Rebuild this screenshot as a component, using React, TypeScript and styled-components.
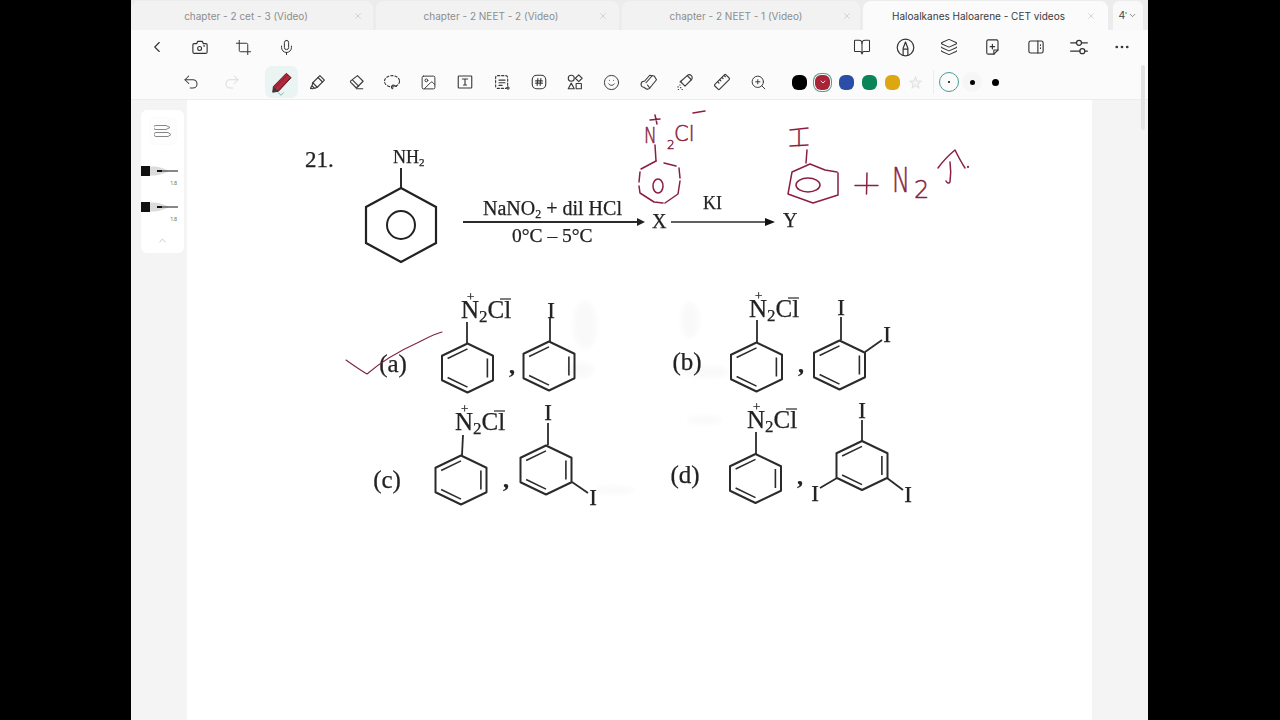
import React from "react";
import styled, { createGlobalStyle } from "styled-components";
import { BookOpen, ChevronDown, ChevronLeft, ChevronUp, Crop, Image, Layers, Mic, MoreHorizontal, Redo2, Smile, Undo2, X, ZoomIn } from "lucide-react";

const Global = createGlobalStyle`
  html, body { margin: 0; background: #000; }
  body { font-family: Inter, "Liberation Sans", sans-serif; overflow: hidden; }
`;

const Stage = styled.div`
  width: 1280px;
  height: 720px;
  display: flex;
  padding-left: 131px;
  box-sizing: border-box;
`;

const Tablet = styled.div`
  position: relative;
  width: 1017px;
  height: 720px;
  display: flex;
  flex-direction: column;
  background: #f4f4f4;
  overflow: hidden;
`;

const TabBar = styled.div`
  height: 30px;
  display: flex;
  gap: 3px;
  padding-top: 1px;
  box-sizing: border-box;
  background: #ececec;
`;

const Tab = styled.div<{ $active?: boolean; $width: number }>`
  width: ${p => p.$width}px;
  display: flex;
  align-items: center;
  padding-left: 8px;
  box-sizing: border-box;
  border-radius: 8px 8px 0 0;
  background: ${p => (p.$active ? "#fbfbfb" : "#f2f2f2")};
  color: ${p => (p.$active ? "#3a3a3a" : "#8d8d8d")};
  font-size: 10px;
`;

const TabTitle = styled.span`
  flex: 1;
  text-align: center;
  white-space: nowrap;
`;

const TabClose = styled.span<{ $gap: number }>`
  display: flex;
  margin-right: ${p => p.$gap}px;
  color: #b5b5b5;
`;

const PageCount = styled.div`
  width: 30px;
  margin-left: 2px;
  display: flex;
  align-items: center;
  justify-content: center;
  background: #f9f9f9;
  border-radius: 6px 6px 0 0;
  color: #444;
  font-size: 10.5px;
`;

const Dot = styled.i`
  width: 2px;
  height: 2px;
  margin: 0 1px 6px 0;
  border-radius: 50%;
  background: #53c98a;
`;

const TopBar = styled.div`
  height: 34px;
  display: flex;
  align-items: center;
  padding-left: 4px;
  background: #fbfbfb;
  color: #333;
`;

const TopGroup = styled.div<{ $right?: boolean }>`
  display: flex;
  margin-left: ${p => (p.$right ? "auto" : "0")};
  margin-right: ${p => (p.$right ? "4px" : "0")};
`;

const TopButton = styled.span`
  width: 43.4px;
  height: 30px;
  display: flex;
  align-items: center;
  justify-content: center;
`;

const ToolBar = styled.div`
  height: 36px;
  display: flex;
  align-items: center;
  padding: 1px 0 0 42px;
  background: #fbfbfb;
  border-bottom: 1px solid #ececec;
  box-sizing: border-box;
  color: #3a3a3a;
`;

const Tool = styled.span<{ $active?: boolean; $faded?: boolean; $width?: number; $gap?: number }>`
  width: ${p => p.$width ?? 36.7}px;
  height: 32px;
  margin-left: ${p => p.$gap ?? 0}px;
  flex: none;
  display: flex;
  align-items: center;
  justify-content: center;
  border-radius: 7px;
  position: relative;
  color: ${p => (p.$faded ? "#dcdcdc" : "inherit")};
  background: ${p => (p.$active ? "#e9f4f3" : "transparent")};
`;

const ActiveCaret = styled.span`
  position: absolute;
  bottom: -1px;
  left: 50%;
  margin-left: -5px;
  display: flex;
  color: #2f8f8a;
`;

const Swatches = styled.div`
  display: flex;
  align-items: center;
  gap: 8.3px;
  margin-left: 15px;
`;

const Swatch = styled.span<{ $color: string; $selected?: boolean }>`
  width: 15px;
  height: 15px;
  display: flex;
  align-items: center;
  justify-content: center;
  border-radius: 6px;
  background: ${p => p.$color};
  color: #fff;
  box-shadow: ${p => (p.$selected ? `0 0 0 1px #fbfbfb, 0 0 0 2px #4f9a98` : "none")};
`;

const Divider = styled.span`
  width: 1px;
  height: 24px;
  margin: 0 5px 0 11px;
  background: #eeeeee;
`;

const Sizes = styled.div`
  display: flex;
  align-items: center;
  gap: 3.5px;
`;

const SizeButton = styled.span<{ $selected?: boolean; $dot: number }>`
  width: 20px;
  height: 20px;
  display: flex;
  align-items: center;
  justify-content: center;
  border-radius: 50%;
  box-sizing: border-box;
  border: ${p => (p.$selected ? "1px solid #4f9a98" : "none")};
  background: ${p => (p.$dot === 5 ? "#f6f6f6" : "transparent")};
  &::after {
    content: "";
    width: ${p => p.$dot}px;
    height: ${p => p.$dot}px;
    border-radius: 50%;
    background: #000;
  }
`;

const Workspace = styled.div`
  flex: 1;
  display: flex;
  min-height: 0;
`;

const RailColumn = styled.div`
  width: 56px;
  flex: none;
  padding: 10px 0 0 10px;
  box-sizing: border-box;
`;

const Rail = styled.div`
  width: 43px;
  height: 143px;
  display: flex;
  flex-direction: column;
  align-items: center;
  background: #fff;
  border-radius: 6px;
`;

const RailTop = styled.span`
  width: 26px;
  height: 26px;
  margin-top: 8px;
  display: flex;
  align-items: center;
  justify-content: center;
  border-radius: 5px;
  background: #fdfdfd;
  box-shadow: 0 0 2px #f0f0f0;
  color: #888;
`;

const PenRow = styled.div<{ $first?: boolean }>`
  width: 100%;
  height: 36px;
  margin-top: ${p => (p.$first ? "20px" : "0")};
  display: flex;
  flex-direction: column;
`;

const PenWidth = styled.span`
  align-self: flex-end;
  margin: 2px 7px 0 0;
  color: #777;
  font-size: 5px;
  line-height: 7px;
`;

const RailCaret = styled.span`
  margin-top: -1px;
  display: flex;
  color: #999;
`;

const Sheet = styled.div`
  width: 905px;
  flex: none;
  background: #fff;
`;

const SheetArt = styled.svg`
  display: block;
  width: 905px;
  height: 620px;
  font-family: "Liberation Serif", "Times New Roman", serif;
  fill: #222;
`;

const Print = styled.text`
  filter: blur(0.3px);
  stroke: #222;
  stroke-width: 0.25px;
`;

const Ink = styled.text`
  fill: #8b1f40;
  stroke: #8b1f40;
  stroke-width: 0.5px;
  font-family: "DejaVu Sans", sans-serif;
  font-weight: 200;
`;

const Scroller = styled.div`
  position: absolute;
  top: 65px;
  right: 3px;
  width: 4px;
  height: 65px;
  border-radius: 2px;
  background: #e3e3e3;
`;

const I = { size: 17, strokeWidth: 1.4 };

const Svg = ({ w = 18, h = 18, vb = "0 0 24 24", sw = 1.5, children }: { w?: number; h?: number; vb?: string; sw?: number; children: React.ReactNode }) => (
  <svg width={w} height={h} viewBox={vb} fill="none" stroke="currentColor" strokeWidth={sw} strokeLinecap="round" strokeLinejoin="round">
    {children}
  </svg>
);

const CameraIcon = () => (
  <Svg>
    <path d="M4 7.500h3.500L9 4.500h6l1.500 3H20a1.500 1.500 0 0 1 1.500 1.500v9.500A2 2 0 0 1 19.500 20.500h-15A2 2 0 0 1 2.500 18.500V9A1.500 1.500 0 0 1 4 7.500z" />
    <circle cx="11.500" cy="14" r="2.600" />
    <circle cx="17.500" cy="10.500" r=".4" />
  </Svg>
);

const PenCircleIcon = () => (
  <Svg w={19} h={19}>
    <circle cx="12" cy="12" r="10.500" />
    <path d="M9 22V13l3-8 3 8v9M9 14h6" />
  </Svg>
);

const NoteIcon = () => (
  <Svg>
    <path d="M7 2.500h11a2 2 0 0 1 2 2V16l-5.500 5.500H7a2 2 0 0 1-2-2v-15a2 2 0 0 1 2-2z" />
    <path d="M20 16h-5.500v5.500M12.500 8.500v6M9.500 11.500h6" />
  </Svg>
);

const PanelIcon = () => (
  <Svg>
    <rect x="2.500" y="4" width="19" height="16" rx="2.500" />
    <path d="M14.500 4v16M18 9v1M18 13v1" />
  </Svg>
);

const SlidersIcon = () => (
  <Svg w={20} h={20}>
    <path d="M2 7h7M15 7h7M2 17h11M19 17h3" />
    <circle cx="12" cy="7" r="3" />
    <circle cx="16" cy="17" r="3" />
  </Svg>
);

const PenIcon = () => (
  <svg width="21" height="21" viewBox="0 0 24 24">
    <path d="M17.500 1.500l5.500 5-14.500 15.500L2 23l.8-6.500z" fill="#b3283c" stroke="#4a2027" strokeWidth="1.100" strokeLinejoin="round" />
    <path d="M5 17.500l14-14.500M8.500 21L21.500 7" stroke="#7e1a2a" strokeWidth="1" />
    <path d="M2.800 16.500L2 23l6.500-1z" fill="#3a3a3a" />
  </svg>
);

const HighlighterIcon = () => (
  <Svg>
    <path d="M14.500 3.500l6 6-9.500 9.500-6-6z" />
    <path d="M5 13l-1 4 3.500 3.500 3.500-1.500M3.500 17.500l-1.500 3 3 .5 1.500-1.500M12 6l6 6" />
  </Svg>
);

const EraserIcon = () => (
  <Svg>
    <path d="M14 3.500l7.500 7.500-9 9-7.500-7.500a1.500 1.500 0 0 1 0-2z" />
    <path d="M7.500 9.500l8 8M12.500 21H21" />
  </Svg>
);

const LassoIcon = () => (
  <Svg>
    <ellipse cx="12" cy="11" rx="10" ry="7.500" strokeDasharray="3 2.600" />
    <path d="M13 21a2.500 2.500 0 1 1 3-3.500M15 17l3 1" />
  </Svg>
);

const TextBoxIcon = () => (
  <Svg>
    <rect x="3" y="4" width="18" height="16" rx="1" />
    <path d="M8.500 8h7M12 8v8M10 16h4" />
  </Svg>
);

const TextSelectIcon = () => (
  <Svg>
    <rect x="3.500" y="3.500" width="16" height="17" rx="2.500" strokeDasharray="3 2.500" />
    <path d="M8 9.500h8M8 13h8M8 16.500h4M20 18v4M18 20h4" />
  </Svg>
);

const HashIcon = () => (
  <Svg>
    <rect x="3" y="3" width="18" height="18" rx="6" />
    <path d="M10.500 7.500l-1 9M14.500 7.500l-1 9M7.500 10.500h9M7.500 13.500h9" />
  </Svg>
);

const ShapesIcon = () => (
  <Svg>
    <circle cx="7" cy="7" r="4" />
    <path d="M17 2.500l4.500 4.500-4.500 4.500L12.500 7zM7 13.500l4 7.500H3z" />
    <rect x="13.500" y="14" width="7" height="7" rx=".5" />
  </Svg>
);

const TapeIcon = () => (
  <Svg>
    <path d="M6 11l7-8 6 1 3 5-9 11a4 4 0 0 1-5 1l-3-2a4 4 0 0 1 1-8z" />
    <path d="M8 13l8-9M13 20l-3-4" />
  </Svg>
);

const LaserIcon = () => (
  <Svg>
    <path d="M15 3.500l5.500 5.500-8.500 8.500-5.500-5.500a3.900 3.900 0 0 1 0-1z" />
    <path d="M15 3.500a3.500 3.500 0 0 1 5.500 5.500M6.500 11l-1 1M5 16h.5M2.500 18.500h.5M6 19.500h.5M3 22h.5M8 22h.5" />
  </Svg>
);

const RulerIcon = () => (
  <Svg>
    <rect x="1.500" y="7.500" width="21" height="9" rx="1.500" transform="rotate(-45 12 12)" />
    <path d="M9 9l1.500 1.500M12 6l1.500 1.500M15 3.500l1.500 1.500M6.500 12L8 13.500" />
  </Svg>
);

const StarIcon = () => (
  <svg width="13" height="13" viewBox="0 0 24 24" fill="#f4f4f4" stroke="#e2e2e2" strokeWidth="2">
    <path d="M12 2l3 7 7 .7-5.300 4.800L18.200 22 12 18l-6.200 4 1.500-7.500L2 9.700 9 9z" />
  </svg>
);

const RailIcon = () => (
  <svg width="18" height="14" viewBox="0 0 18 14" fill="none" stroke="currentColor" strokeWidth="1">
    <path d="M2 1.500h10l4 2-4 2H2a1 1 0 0 1-.6-4zM2 8.500h12l3 2-3 2H2a1 1 0 0 1 0-4z" />
  </svg>
);

const Nib = () => (
  <svg width="43" height="14" viewBox="0 0 43 14">
    <rect x="0" y="2" width="9" height="10" fill="#111" />
    <path d="M9 2.500h5c5 0 9 2.500 14 4h9v1h-9C23 9 19 11.500 14 11.500H9z" fill="#dcdcdc" />
    <path d="M16 7h21" stroke="#222" strokeWidth="1" />
    <path d="M16 7h5" stroke="#111" strokeWidth="2" />
  </svg>
);

// one benzene ring: the scans are a little wider than a true hexagon, kekule bonds on upper left, right and lower left
const Ring = ({ x, y, w = 25.500, h = 24.500 }: { x: number; y: number; w?: number; h?: number }) => {
  const pts = [[0, -h], [w, -h / 2], [w, h / 2], [0, h], [-w, h / 2], [-w, -h / 2]].map(([a, b]) => [x + a, y + b]);
  const pull = (p: number[], k: number) => [x + (p[0] - x) * k, y + (p[1] - y) * k];
  const bond = (a: number, b: number) => {
    const p = pull(pts[a], 0.78);
    const q = pull(pts[b], 0.78);
    return `M${p[0]} ${p[1]}L${q[0]} ${q[1]}`;
  };
  return (
    <g fill="none" stroke="#2b2b2b" strokeWidth="2">
      <polygon points={pts.map(p => p.join(",")).join(" ")} strokeLinejoin="round" />
      <path d={`${bond(5, 0)}${bond(1, 2)}${bond(3, 4)}`} strokeWidth="1.600" />
    </g>
  );
};

const Line = ({ d, w = 1.800 }: { d: string; w?: number }) => <path d={d} fill="none" stroke="#2b2b2b" strokeWidth={w} />;

const Diazonium = ({ x, y }: { x: number; y: number }) => (
  <>
    <Print x={x} y={y} fontSize="25">
      N<tspan fontSize="17" dy="4">2</tspan>
      <tspan dy="-4">Cl</tspan>
    </Print>
    <Print x={x + 6} y={y - 17} fontSize="13">+</Print>
    <Line d={`M${x + 39} ${y - 19}h11`} w={1.200} />
  </>
);

const Iodo = ({ x, y }: { x: number; y: number }) => (
  <Print x={x} y={y} fontSize="23" textAnchor="middle">I</Print>
);

const Label = ({ x, y, t }: { x: number; y: number; t: string }) => (
  <Print x={x} y={y} fontSize="25" textAnchor="middle">{t}</Print>
);

const Comma = ({ x, y }: { x: number; y: number }) => (
  <Print x={x} y={y} fontSize="24" textAnchor="middle" fontWeight="700">,</Print>
);

const Question = () => (
  <SheetArt viewBox="187 100 905 620" role="img">
    <defs>
      <filter id="soft"><feGaussianBlur stdDeviation="2.500" /></filter>
    </defs>
    <g filter="url(#soft)" fill="#f9f9f9">
      <ellipse cx="585" cy="325" rx="12" ry="24" />
      <ellipse cx="580" cy="370" rx="14" ry="8" />
      <ellipse cx="690" cy="320" rx="9" ry="18" />
      <ellipse cx="705" cy="372" rx="24" ry="6" />
      <ellipse cx="705" cy="420" rx="18" ry="4" />
      <ellipse cx="615" cy="490" rx="20" ry="4" />
    </g>

    <Print x="305" y="167" fontSize="23">21.</Print>
    <Print x="393" y="163" fontSize="18">NH<tspan fontSize="11" dy="3">2</tspan></Print>
    <Line d="M401 168v20" w={2} />
    <polygon points="401,188 436,207 436,243 401,262 366,243 366,207" fill="none" stroke="#222" strokeWidth="2.200" />
    <circle cx="401" cy="225" r="14" fill="none" stroke="#222" strokeWidth="2" />

    <Print x="483" y="215" fontSize="20">NaNO<tspan fontSize="12" dy="3">2</tspan><tspan dy="-3"> + dil HCl</tspan></Print>
    <Print x="512" y="242" fontSize="19.500">0°C – 5°C</Print>
    <Line d="M463 222H640" w={1.800} />
    <path d="M637 218l8 4-8 4z" fill="#222" />
    <Print x="652" y="228" fontSize="20">X</Print>
    <Print x="703" y="209" fontSize="18">KI</Print>
    <Line d="M671 222H768" w={1.600} />
    <path d="M765 218l10 4-10 4z" fill="#111" />
    <Print x="783" y="227" fontSize="20">Y</Print>

    <Label x={393} y={372} t="(a)" />
    <Diazonium x={461} y={318} />
    <Line d="M467 322v22" />
    <Ring x={467.500} y={368} />
    <Comma x={512} y={373} />
    <Iodo x={551} y={318} />
    <Line d="M550 318v24" />
    <Ring x={549} y={366} />

    <Label x={687} y={370} t="(b)" />
    <Diazonium x={749} y={317} />
    <Line d="M757 320v22" />
    <Ring x={756.500} y={367} />
    <Comma x={801} y={372} />
    <Iodo x={841} y={315} />
    <Line d="M841 317v23" />
    <Line d="M865 352l17-12" />
    <Iodo x={887} y={342} />
    <Ring x={839.500} y={365} />

    <Label x={387} y={488} t="(c)" />
    <Diazonium x={455} y={430} />
    <Line d="M463 435l-1 20" />
    <Ring x={461} y={480} />
    <Comma x={506} y={487} />
    <Iodo x={548} y={420} />
    <Line d="M548 423v22" />
    <Line d="M572 482l16 11" />
    <Iodo x={593} y={505} />
    <Ring x={546} y={470} />

    <Label x={685} y={483} t="(d)" />
    <Diazonium x={747} y={428} />
    <Line d="M756 432v22" />
    <Ring x={755.500} y={478.500} />
    <Comma x={800} y={484} />
    <Iodo x={862} y={418} />
    <Line d="M862 420v21" />
    <Line d="M887 478l16 12" />
    <Iodo x={908} y={502} />
    <Line d="M837 478l-17 10" />
    <Iodo x={815} y={501} />
    <Ring x={862} y={465.500} />

    {/* red pen notes */}
    <g fill="none" stroke="#8b1f40" strokeWidth="1.500" strokeLinecap="round" strokeLinejoin="round">
      <path d="M346 360c7 5 14 10 21 14c14-12 30-22 50-31c8-4 17-9 25-11" stroke="#7d2440" strokeWidth="1.100" />
      <path d="M655 115l2 9M650 120l10-1M693 113l12-2" />
      <path d="M655 145l1 16" />
      <path d="M656 161l-15 8M640 172l-1 10M639 186l1 7 14 9 9 1M665 203l13-9 2-13M680 178l-1-10M676 166l-12-3" />
      <ellipse cx="658" cy="186" rx="5" ry="7" />
      <path d="M790 130l18-2M790 146l18-1" />
      <path d="M807 150l-1 13" />
      <path d="M810 164l-18 8-2 11-2 11 25 9 25-8 0-22M837 172l-12-2-15-6" />
      <ellipse cx="808" cy="185" rx="12" ry="7" />
      <path d="M855 185.500h23M867 173l-.5 21" />
      <path d="M938 168c5-7 11-13 17-18c3 6 6 12 10 18M950 162c1 7 1 13 0 20c-1 2-3 1-4-1" />
      <circle cx="968" cy="167" r=".4" />
    </g>
    <Ink transform="translate(644 143) scale(.85 1.050)" fontSize="20">N</Ink>
    <Ink x="667" y="149" fontSize="12">2</Ink>
    <Ink x="674" y="141" fontSize="21">Cl</Ink>
    <Ink x="799" y="146" fontSize="22" textAnchor="middle">I</Ink>
    <Ink transform="translate(892 192) scale(.8 1.150)" fontSize="30">N</Ink>
    <Ink x="914" y="198" fontSize="24">2</Ink>
  </SheetArt>
);

const tabs = [
  { title: "chapter - 2 cet - 3 (Video)", width: 242, close: 10 },
  { title: "chapter - 2 NEET - 2 (Video)", width: 243, close: 11 },
  { title: "chapter - 2 NEET - 1 (Video)", width: 238, close: 8 },
];

export default function App() {
  return (
    <Stage>
      <Global />
      <Tablet>
        <TabBar>
          {tabs.map(t => (
            <Tab key={t.title} $width={t.width}>
              <TabTitle>{t.title}</TabTitle>
              <TabClose $gap={t.close}><X size={10} strokeWidth={1.2} /></TabClose>
            </Tab>
          ))}
          <Tab $active $width={245}>
            <TabTitle>Haloalkanes Haloarene - CET videos</TabTitle>
            <TabClose $gap={12}><X size={10} strokeWidth={1.2} /></TabClose>
          </Tab>
          <PageCount>4<Dot /><ChevronDown size={9} strokeWidth={1.6} /></PageCount>
        </TabBar>

        <TopBar>
          <TopGroup>
            <TopButton><ChevronLeft size={18} strokeWidth={1.5} /></TopButton>
            <TopButton><CameraIcon /></TopButton>
            <TopButton><Crop {...I} /></TopButton>
            <TopButton><Mic {...I} /></TopButton>
          </TopGroup>
          <TopGroup $right>
            <TopButton><BookOpen {...I} size={18} /></TopButton>
            <TopButton><PenCircleIcon /></TopButton>
            <TopButton><Layers {...I} size={18} /></TopButton>
            <TopButton><NoteIcon /></TopButton>
            <TopButton><PanelIcon /></TopButton>
            <TopButton><SlidersIcon /></TopButton>
            <TopButton><MoreHorizontal size={18} strokeWidth={1.6} /></TopButton>
          </TopGroup>
        </TopBar>

        <ToolBar>
          <Tool $width={36}><Undo2 {...I} size={18} /></Tool>
          <Tool $faded $width={46}><Redo2 {...I} size={18} /></Tool>
          <Tool $active $width={33} $gap={9.5}>
            <PenIcon />
            <ActiveCaret><ChevronDown size={10} strokeWidth={1.5} /></ActiveCaret>
          </Tool>
          <Tool $width={40}><HighlighterIcon /></Tool>
          <Tool $width={36}><EraserIcon /></Tool>
          <Tool><LassoIcon /></Tool>
          <Tool><Image {...I} /></Tool>
          <Tool><TextBoxIcon /></Tool>
          <Tool><TextSelectIcon /></Tool>
          <Tool><HashIcon /></Tool>
          <Tool><ShapesIcon /></Tool>
          <Tool><Smile {...I} /></Tool>
          <Tool><TapeIcon /></Tool>
          <Tool><LaserIcon /></Tool>
          <Tool><RulerIcon /></Tool>
          <Tool><ZoomIn {...I} /></Tool>
          <Swatches>
            <Swatch $color="#000" />
            <Swatch $color="#a92437" $selected><ChevronDown size={8} strokeWidth={2.5} /></Swatch>
            <Swatch $color="#2b4da8" />
            <Swatch $color="#0b8457" />
            <Swatch $color="#dca710" />
            <StarIcon />
          </Swatches>
          <Divider />
          <Sizes>
            <SizeButton $selected $dot={2} />
            <SizeButton $dot={5} />
            <SizeButton $dot={7} />
          </Sizes>
        </ToolBar>

        <Workspace>
          <RailColumn>
            <Rail>
              <RailTop><RailIcon /></RailTop>
              <PenRow $first><Nib /><PenWidth>1.8</PenWidth></PenRow>
              <PenRow><Nib /><PenWidth>1.8</PenWidth></PenRow>
              <RailCaret><ChevronUp size={11} strokeWidth={1.2} /></RailCaret>
            </Rail>
          </RailColumn>
          <Sheet><Question /></Sheet>
        </Workspace>
        <Scroller />
      </Tablet>
    </Stage>
  );
}
